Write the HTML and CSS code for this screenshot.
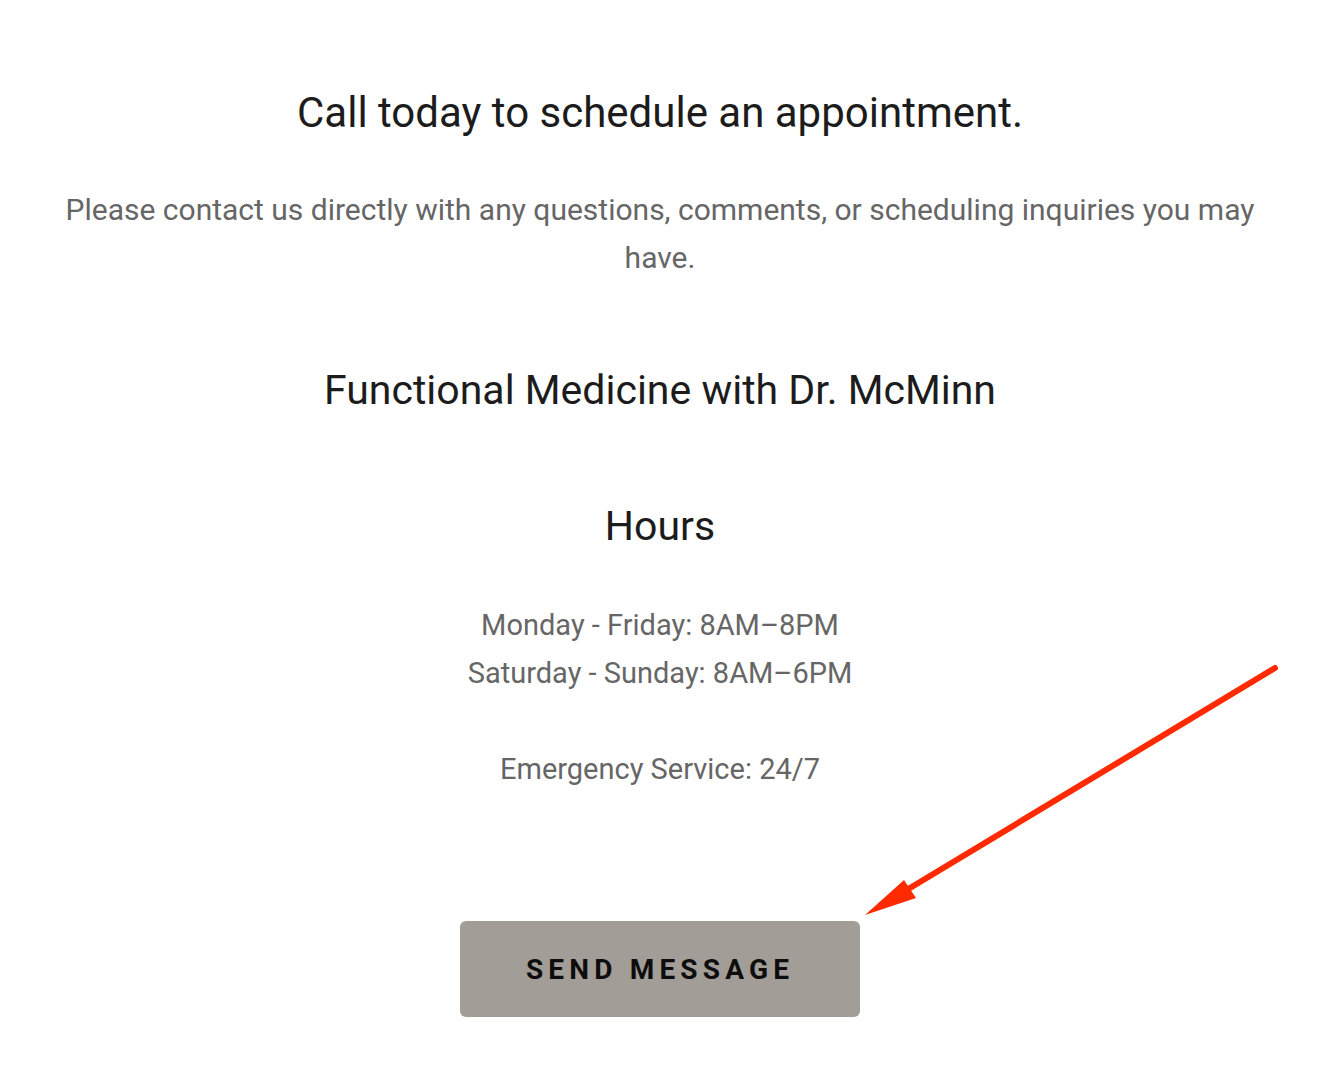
FILE: index.html
```html
<!DOCTYPE html>
<html lang="en">
<head>
<meta charset="utf-8">
<title>Contact</title>
<link rel="stylesheet" href="styles.css">
</head>
<body>
<main class="page">
  <section class="contact">
    <h1 class="heading">Call today to schedule an appointment.</h1>
    <p class="lead">Please contact us directly with any questions, comments, or scheduling inquiries you may have.</p>
    <h2 class="heading heading-sub">Functional Medicine with Dr. McMinn</h2>
    <h3 class="heading heading-sub heading-hours">Hours</h3>
    <p class="hours">Monday - Friday: 8AM–8PM<br>Saturday - Sunday: 8AM–6PM</p>
    <p class="hours hours-extra">Emergency Service: 24/7</p>
    <a class="btn" href="#">SEND MESSAGE</a>
  </section>
  <svg class="annotation" width="1324" height="1068" viewBox="0 0 1324 1068" aria-hidden="true">
    <line x1="1275" y1="668" x2="900" y2="894" stroke="#ff2a00" stroke-width="6" stroke-linecap="round"/>
    <polygon points="865,915 904,880 916,898" fill="#ff2a00"/>
  </svg>
</main>
</body>
</html>
```

FILE: styles.css
```css
html, body {
  margin: 0;
  padding: 0;
  background: #ffffff;
}

.page {
  position: relative;
  width: 1324px;
  min-height: 1068px;
  font-family: Roboto, "Liberation Sans", sans-serif;
}

.contact {
  display: flex;
  flex-direction: column;
  align-items: center;
  text-align: center;
  padding: 88px 62px 0 58px;
}

.heading {
  margin: 0;
  font-size: 42px;
  line-height: 50px;
  font-weight: 400;
  color: #1c1c1c;
}

.lead {
  margin: 48px 0 0;
  font-size: 30px;
  line-height: 48px;
  color: #666666;
}

.heading-sub {
  margin-top: 83px;
  font-size: 41px;
}

.heading-hours {
  margin-top: 86px;
}

.hours {
  margin: 50px 0 0;
  font-size: 29px;
  line-height: 48px;
  color: #666666;
}

.hours-extra {
  margin-top: 48px;
}

.btn {
  margin-top: 128px;
  width: 400px;
  height: 96px;
  display: flex;
  align-items: center;
  justify-content: center;
  background: #a29d96;
  border-radius: 6px;
  color: #0d0d0d;
  text-decoration: none;
  font-size: 28px;
  font-weight: 700;
  letter-spacing: 0.185em;
  box-sizing: border-box;
}

.annotation {
  position: absolute;
  left: 0;
  top: 0;
  pointer-events: none;
}
```
